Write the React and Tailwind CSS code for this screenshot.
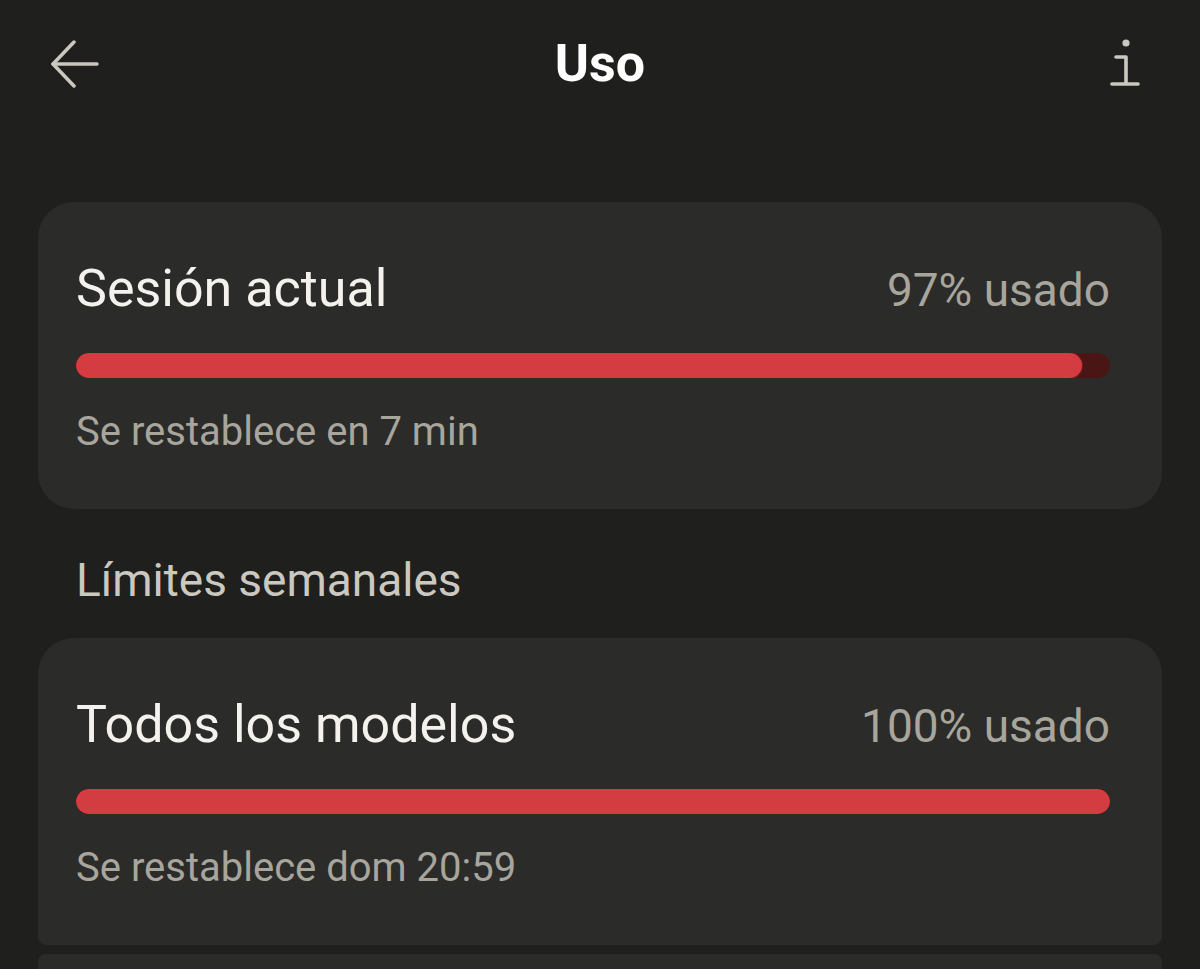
import React from 'react';

const UsageCard = ({ title, usage, percent, reset, className }) => (
    <div className={"bg-[#2b2b2a] pl-[38px] pr-[52px] pt-[57px] pb-[53px] " + className}>
        <div className="flex items-baseline justify-between">
            <h2 className="text-[52px] leading-[60px] text-[#f4f2ed]">{title}</h2>
            <span className="text-[46px] leading-[60px] text-[#a8a59d]">{usage}</span>
        </div>
        <div className="mt-[33px] h-[25px] w-full rounded-full bg-[#4a1515] overflow-hidden">
            <div className="h-full rounded-full bg-[#d33c40] ring-1 ring-[#7a1d1f]" style={{ width: percent + '%' }} />
        </div>
        <p className="mt-[30px] text-[40px] leading-[48px] text-[#a8a59d]">{reset}</p>
    </div>
);

const App = () => {
    return (
        <div className="h-[969px] overflow-hidden bg-[#1f1f1e] font-['Roboto',sans-serif]">
            {/* Header */}
            <div className="relative flex h-[130px] items-center justify-between pl-[50px] pr-[60px]">
                <svg width="50" height="48" viewBox="0 0 50 48" fill="none" stroke="#cbc8bf" strokeWidth="3.5" strokeLinecap="round" strokeLinejoin="round" className="mt-[-2px]">
                    <path d="M3 24 H47" />
                    <path d="M24 2 L3 24 L24 46" />
                </svg>
                <h1 className="absolute left-1/2 -translate-x-1/2 top-[34px] text-[52px] leading-[60px] font-bold text-white">Uso</h1>
                <svg width="32" height="52" viewBox="0 0 32 52" fill="none" className="mt-[-4px]">
                    <circle cx="18" cy="6" r="3.6" fill="#cbc8bf" />
                    <path d="M8 20 H18 V46" stroke="#cbc8bf" strokeWidth="3.6" strokeLinecap="round" strokeLinejoin="round" />
                    <path d="M4 47 H30" stroke="#cbc8bf" strokeWidth="3.6" strokeLinecap="round" />
                </svg>
            </div>

            <div className="px-[38px] pt-[72px]">
                <UsageCard
                    title="Sesión actual"
                    usage="97% usado"
                    percent={97.3}
                    reset="Se restablece en 7 min"
                    className="rounded-[36px]"
                />

                <p className="mt-[44px] px-[38px] text-[46px] leading-[54px] text-[#cbc8bf]">Límites semanales</p>

                <div className="mt-[31px] flex flex-col gap-[9px]">
                    <UsageCard
                        title="Todos los modelos"
                        usage="100% usado"
                        percent={100}
                        reset="Se restablece dom 20:59"
                        className="rounded-t-[36px] rounded-b-[8px]"
                    />
                    <div className="h-[120px] rounded-t-[8px] bg-[#2b2b2a]" />
                </div>
            </div>
        </div>
    );
};

export default App;
